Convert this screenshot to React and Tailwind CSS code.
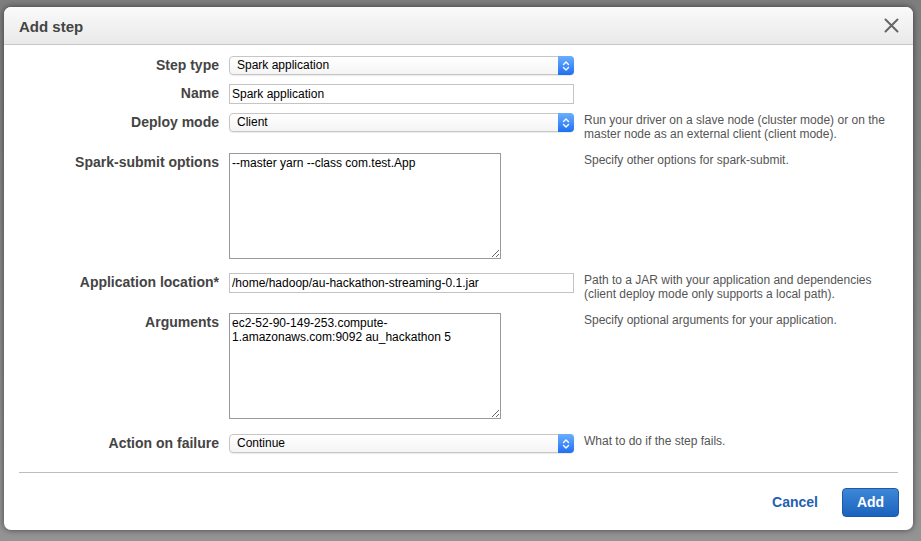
import React from 'react';

const font = { fontFamily: '"Liberation Sans", Arial, sans-serif' };

const Chevrons = () => (
  <svg width="8" height="12" viewBox="0 0 8 12" fill="none" stroke="white" strokeWidth="1.4" strokeLinecap="round" strokeLinejoin="round">
    <path d="M1.5 4.5 L4 2 L6.5 4.5" />
    <path d="M1.5 7.5 L4 10 L6.5 7.5" />
  </svg>
);

const Select = ({ value }) => (
  <div className="flex h-[19px] w-[345px] items-stretch rounded-[4px] border border-[#c6c6c6] bg-gradient-to-b from-white to-[#f4f4f4] shadow-[0_1px_1px_rgba(0,0,0,0.08)]">
    <span className="flex-1 pl-[7px] text-[12px] leading-[17px] text-black">{value}</span>
    <span className="-my-px -mr-px flex w-[16px] items-center justify-center rounded-r-[4px] bg-gradient-to-b from-[#6aaefc] to-[#1d6ff4]">
      <Chevrons />
    </span>
  </div>
);

const Input = ({ value }) => (
  <div className="h-[20px] w-[345px] border border-[#c4c4c4] bg-white pl-[2px] text-[12px] leading-[18px] text-black">
    {value}
  </div>
);

const Area = ({ value }) => (
  <textarea
    readOnly
    defaultValue={value}
    className="block h-[106px] w-[272px] resize border border-[#999] bg-white px-[2px] py-[2px] text-[12px] leading-[14px] text-black outline-none"
    style={font}
  />
);

const Row = ({ label, children, desc, className }) => (
  <div className={`flex items-start ${className}`}>
    <div className="w-[200px] shrink-0 text-right text-[14px] font-bold leading-[19px] text-[#444]">{label}</div>
    <div className="ml-[10px] w-[345px] shrink-0">{children}</div>
    {desc && (
      <div className="ml-[10px] w-[310px] text-[12px] leading-[14px] text-[#555]">{desc}</div>
    )}
  </div>
);

export default function App() {
  return (
    <div className="h-[541px] w-[921px] overflow-hidden bg-gradient-to-b from-[#7e7e7e] to-[#949494] pl-[4px] pt-[7px]" style={font}>
      <div className="flex h-[523px] w-[909px] flex-col overflow-hidden rounded-[7px] bg-white shadow-[0_0_6px_rgba(0,0,0,0.55)]">
        {/* Header */}
        <div className="flex h-[38px] shrink-0 items-center justify-between border-b border-[#c9c9c9] bg-gradient-to-b from-[#fafafa] to-[#e9e9e9] pl-[15px] pr-[14px] pt-[3px]">
          <h2 className="text-[15px] font-bold text-[#444]">Add step</h2>
          <svg width="15" height="15" viewBox="0 0 15 15" stroke="#666" strokeWidth="2" strokeLinecap="round" className="-mt-[3px]">
            <path d="M1.5 1.5 L13.5 13.5 M13.5 1.5 L1.5 13.5" />
          </svg>
        </div>

        {/* Form */}
        <div className="flex flex-col px-[15px] pt-[11px]">
          <Row label="Step type">
            <Select value="Spark application" />
          </Row>
          <Row label="Name" className="mt-[9px]">
            <Input value="Spark application" />
          </Row>
          <Row
            label="Deploy mode"
            className="mt-[9px]"
            desc="Run your driver on a slave node (cluster mode) or on the master node as an external client (client mode)."
          >
            <Select value="Client" />
          </Row>
          <Row label="Spark-submit options" className="mt-[12px]" desc="Specify other options for spark-submit.">
            <Area value="--master yarn --class com.test.App" />
          </Row>
          <Row
            label="Application location*"
            className="mt-[14px]"
            desc="Path to a JAR with your application and dependencies (client deploy mode only supports a local path)."
          >
            <Input value="/home/hadoop/au-hackathon-streaming-0.1.jar" />
          </Row>
          <Row label="Arguments" className="mt-[12px]" desc="Specify optional arguments for your application.">
            <Area value="ec2-52-90-149-253.compute-1.amazonaws.com:9092 au_hackathon 5" />
          </Row>
          <Row label="Action on failure" className="mt-[15px]" desc="What to do if the step fails.">
            <Select value="Continue" />
          </Row>
        </div>

        {/* Footer */}
        <div className="mx-[15px] mt-[19px] border-t border-[#bdbdbd]" />
        <div className="flex items-center justify-end gap-[24px] px-[14px] pt-[15px]">
          <button className="text-[14px] font-bold text-[#1f5fb3]">Cancel</button>
          <button className="h-[29px] w-[57px] rounded-[4px] border border-[#1c5aa8] bg-gradient-to-b from-[#3d88d8] to-[#1b62bd] text-[14px] font-bold text-white">
            Add
          </button>
        </div>
      </div>
    </div>
  );
}
